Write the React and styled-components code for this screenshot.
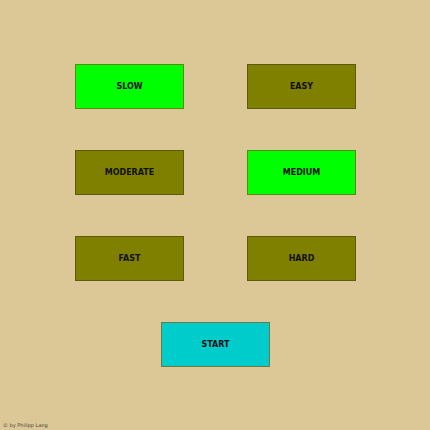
import React from "react";
import styled, { createGlobalStyle } from "styled-components";

const Global = createGlobalStyle`
  html, body {
    margin: 0;
    padding: 0;
    background: #dcc896;
  }
`;

const Page = styled.div`
  width: 430px;
  height: 430px;
  box-sizing: border-box;
  padding: 64px 0 0 75px;
  display: flex;
  flex-direction: column;
  align-items: flex-start;
  font-family: "DejaVu Sans", Verdana, sans-serif;
`;

const Grid = styled.div`
  display: grid;
  grid-template-columns: 109px 109px;
  column-gap: 63px;
  row-gap: 41px;
`;

const Button = styled.button`
  width: 109px;
  height: 45px;
  box-sizing: border-box;
  padding: 0;
  margin: 0;
  border: 1px solid ${(p) => p.$edge};
  background: ${(p) => p.$bg};
  color: #111;
  font-family: inherit;
  font-size: 8px;
  font-weight: bold;
  cursor: pointer;
  grid-column: ${(p) => (p.$wide ? "1 / span 2" : "auto")};
  justify-self: center;
`;

const Footer = styled.div`
  margin: auto 0 0 -75px;
  padding: 0 0 2px 3px;
  font-size: 5px;
  color: #444;
`;

const colors = {
  on: { bg: "#00ff00", edge: "#5a8a10" },
  off: { bg: "#808000", edge: "#5e5a10" },
  start: { bg: "#00cccc", edge: "#6a7a40" },
};

const items = [
  ["SLOW", "on"],
  ["EASY", "off"],
  ["MODERATE", "off"],
  ["MEDIUM", "on"],
  ["FAST", "off"],
  ["HARD", "off"],
];

export default function App() {
  return (
    <>
      <Global />
      <Page>
        <Grid>
          {items.map(([label, kind]) => (
            <Button key={label} $bg={colors[kind].bg} $edge={colors[kind].edge}>
              {label}
            </Button>
          ))}
          <Button $wide $bg={colors.start.bg} $edge={colors.start.edge}>
            START
          </Button>
        </Grid>
        <Footer>© by Philipp Lang</Footer>
      </Page>
    </>
  );
}
